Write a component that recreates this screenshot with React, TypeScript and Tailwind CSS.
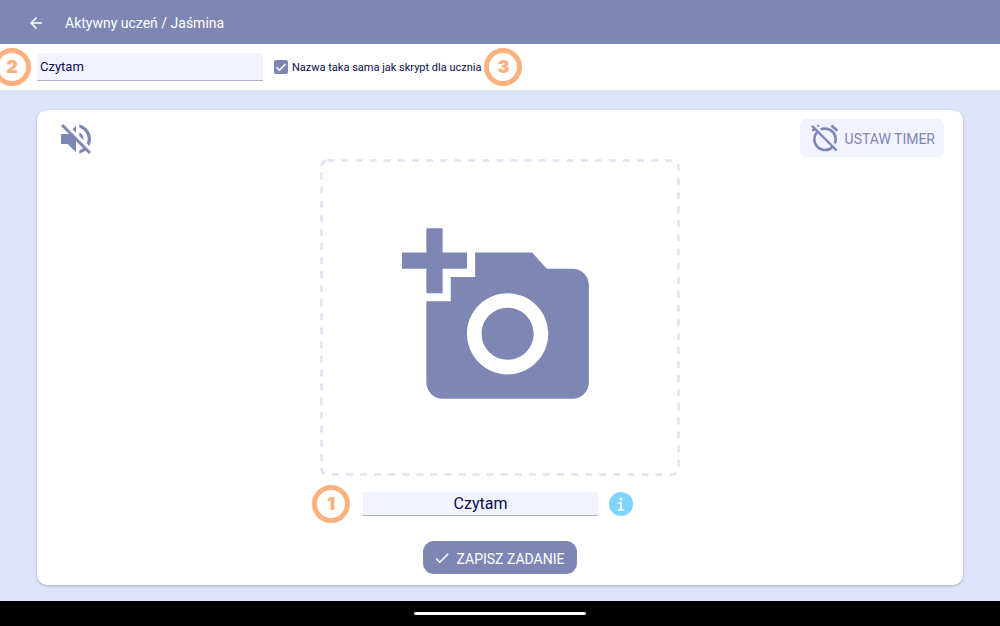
import { useState } from "react";
import {
  MdAddAPhoto,
  MdAlarmOff,
  MdArrowBack,
  MdCheck,
} from "react-icons/md";

function StepBadge({ value }: { value: number }) {
  return (
    <span className="flex size-[38px] shrink-0 items-center justify-center rounded-full border-5 border-[#fdb17c] bg-white font-['Inter',sans-serif] text-lg leading-none font-black text-[#fdb17c]">
      {value}
    </span>
  );
}

function MutedIcon() {
  return (
    <svg viewBox="0 0 24 24" className="size-10 fill-current" aria-hidden="true">
      <path d="M16.5 12c0-1.77-1.02-3.29-2.5-4.03v2.21l2.45 2.45c.03-.2.05-.41.05-.63zm2.5 0c0 .94-.2 1.82-.54 2.64l1.51 1.51C20.63 14.91 21 13.5 21 12c0-4.28-2.99-7.86-7-8.77v2.06c2.89.86 5 3.54 5 6.71zM4.27 3L3 4.27 7.73 9H3v6h4l5 5v-6.73l4.25 4.25c-.67.52-1.42.93-2.25 1.18v2.06c1.38-.31 2.63-.95 3.69-1.81L19.73 21 21 19.73l-9-9L4.27 3zM12 4L9.91 6.09 12 8.18V4z" />
    </svg>
  );
}

function InfoIcon() {
  return (
    <svg viewBox="0 0 24 24" className="size-6" aria-hidden="true">
      <circle cx="12" cy="12" r="12" fill="#7dd5fc" />
      <circle cx="12" cy="7" r="1.6" fill="#fff" />
      <path d="M9.2 10h3.7v7.2h2.3v1.5H8.8v-1.5H11v-5.7H9.2z" fill="#fff" />
    </svg>
  );
}

export default function App() {
  const [name, setName] = useState("Czytam");
  const [script, setScript] = useState("Czytam");
  const [sameName, setSameName] = useState(true);

  return (
    <div className="flex min-h-screen flex-col bg-[#e0e4f9] font-['Roboto',sans-serif] text-[#0b0b4f]">
      <header className="flex h-11 items-center gap-5 bg-[#7e86b4] px-[27px] pt-0.5 text-white">
        <button type="button" aria-label="Wstecz">
          <MdArrowBack className="size-[18px]" />
        </button>
        <h1 className="text-sm">Aktywny uczeń / Jaśmina</h1>
      </header>

      <div className="flex items-center bg-white py-1">
        <div className="-ml-[7px] flex">
          <StepBadge value={2} />
        </div>
        <input
          type="text"
          aria-label="Nazwa zadania"
          value={name}
          onChange={(e) => setName(e.target.value)}
          className="ml-1.5 h-7 w-[226px] border-b border-[#a9aed3] bg-[#f1f3fe] px-[3px] text-[13px] outline-none"
        />
        <label className="ml-[11px] flex items-center gap-1 text-[11px]">
          <span className="relative flex size-3.5">
            <input
              type="checkbox"
              checked={sameName}
              onChange={(e) => setSameName(e.target.checked)}
              className="peer size-3.5 appearance-none rounded-xs border-2 border-[#7e86b4] checked:bg-[#7e86b4]"
            />
            <svg
              viewBox="0 0 14 14"
              className="pointer-events-none absolute inset-0 hidden size-3.5 fill-none stroke-white stroke-[1.6] peer-checked:block"
              aria-hidden="true"
            >
              <path d="M2.5 7.2l3 3 6-6.2" />
            </svg>
          </span>
          <span className="pt-0.5">Nazwa taka sama jak skrypt dla ucznia</span>
        </label>
        <div className="ml-[3px] flex">
          <StepBadge value={3} />
        </div>
      </div>

      <main className="flex flex-1 flex-col px-[37px] pt-5 pb-4">
        <section className="flex flex-1 flex-col items-center rounded-[10px] bg-white pb-2.5 shadow-[0_1px_3px_rgba(60,60,100,0.35)]">
          <div className="flex w-full items-start justify-between pt-[9px] pr-[19px] pl-[19px] text-[#7e86b4]">
            <button type="button" aria-label="Dźwięk wyłączony">
              <MutedIcon />
            </button>
            <button
              type="button"
              className="flex h-[38px] items-center gap-1 rounded-md bg-[#f1f3fe] px-[9px] text-sm"
            >
              <MdAlarmOff className="size-8" />
              <span className="pt-0.5">USTAW TIMER</span>
            </button>
          </div>

          <button
            type="button"
            aria-label="Dodaj zdjęcie"
            className="relative flex h-[317px] w-[360px] items-center justify-center pr-0.5 text-[#7e86b4]"
          >
            <svg className="absolute inset-0 size-full" viewBox="0 0 360 317" aria-hidden="true">
              <rect
                x="1.5"
                y="1.5"
                width="357"
                height="314"
                rx="6"
                fill="none"
                stroke="#e1e2f5"
                strokeWidth="2.5"
                strokeDasharray="7 7.07"
              />
            </svg>
            <MdAddAPhoto className="size-[195px]" />
          </button>

          <div className="mt-[9px] flex w-[376px] items-center">
            <StepBadge value={1} />
            <input
              type="text"
              aria-label="Skrypt dla ucznia"
              value={script}
              onChange={(e) => setScript(e.target.value)}
              className="ml-[13px] h-6 w-[235px] border-b border-[#a9aed3] bg-[#f1f3fe] text-center text-base outline-none"
            />
            <button type="button" aria-label="Informacja" className="ml-[11px]">
              <InfoIcon />
            </button>
          </div>

          <button
            type="button"
            className="mt-[18px] flex h-[33px] items-center gap-1.5 rounded-[11px] bg-[#7e86b4] pr-[13px] pl-2.5 text-sm text-white"
          >
            <MdCheck className="size-[18px]" />
            <span className="pt-0.5">ZAPISZ ZADANIE</span>
          </button>
        </section>
      </main>

      <footer className="flex h-[25px] items-center justify-center bg-black">
        <span className="h-[3px] w-[172px] rounded-full bg-white" />
      </footer>
    </div>
  );
}
